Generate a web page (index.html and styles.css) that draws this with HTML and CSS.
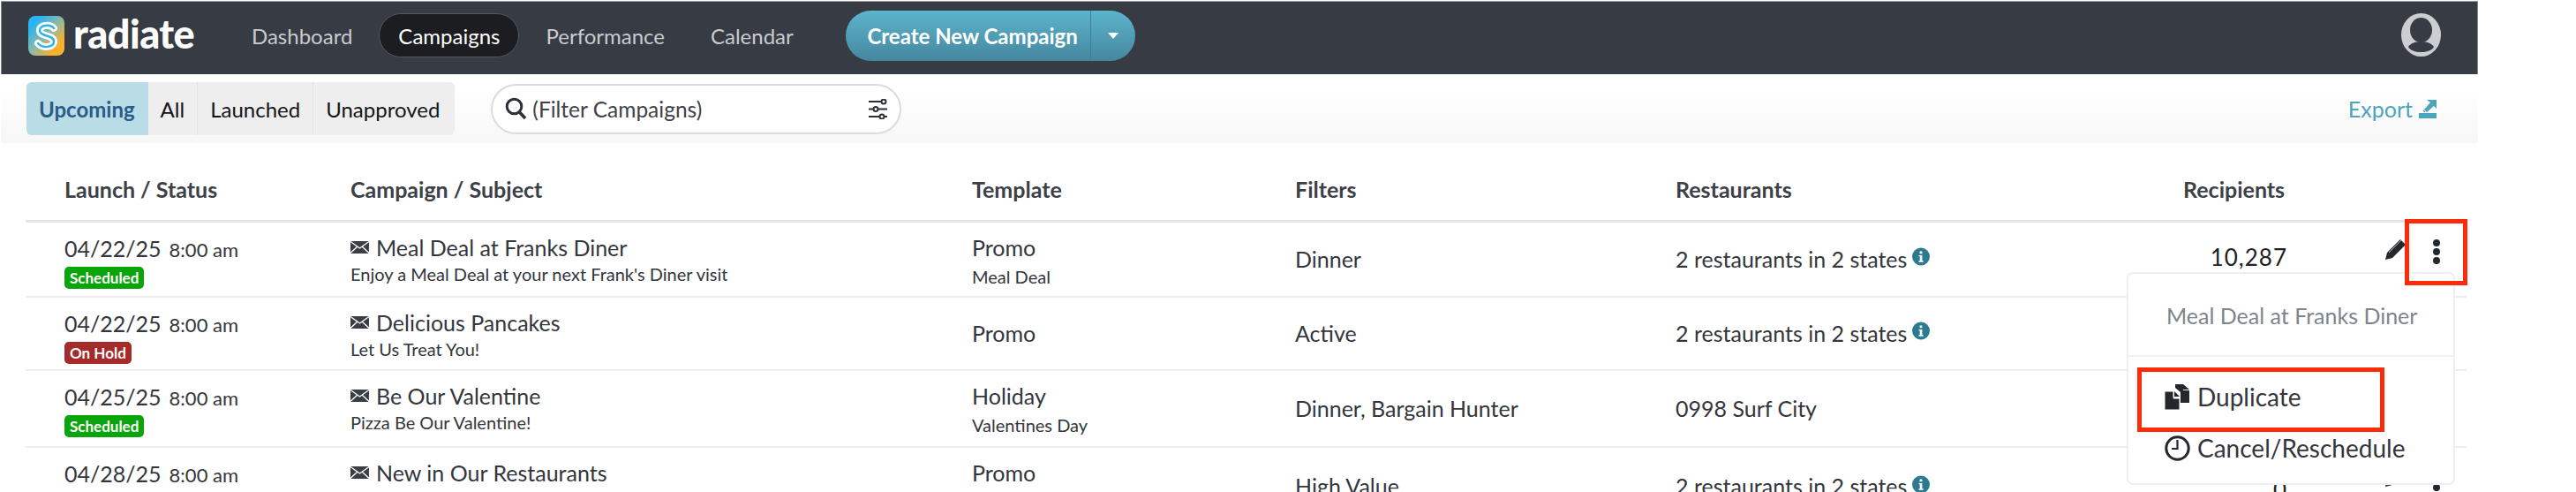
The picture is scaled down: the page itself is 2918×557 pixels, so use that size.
FILE: index.html
```html
<!DOCTYPE html>
<html lang="en">
<head>
<meta charset="utf-8">
<title>Radiate Campaigns</title>
<link rel="stylesheet" href="styles.css">
</head>
<body>
<svg class="defs" width="0" height="0" aria-hidden="true">
  <defs>
    <symbol id="env" viewBox="0 0 21 14"><rect width="21" height="14" fill="#3a3e45"/><path d="M0 .5 10.5 8 21 .5M0 13.5 8 6M21 13.5 13 6" fill="none" stroke="#fff" stroke-width="1.3"/></symbol>
    <symbol id="info" viewBox="0 0 20 20"><circle cx="10" cy="10" r="10" fill="#2c7a90"/><rect x="8.6" y="4" width="2.8" height="2.8" fill="#fff"/><path d="M7.5 8.4h3.9v6.4h1.3v1.4H7.5v-1.4h1.2V9.800H7.500z" fill="#fff"/></symbol>
    <symbol id="pencil" viewBox="0 0 24 25"><path d="M0 25 2 17 17 2 23 8 8 23z" fill="#24272c"/><path d="M4 17 19 2" stroke="#fff" stroke-width=".7"/></symbol>
  </defs>
</svg>
<div class="app">
  <header class="topbar">
    <svg class="logo" viewBox="0 0 41 45" aria-hidden="true">
      <defs><linearGradient id="lg" x1="0" y1="0" x2="1" y2="1"><stop offset=".18" stop-color="#29b4f5"/><stop offset=".5" stop-color="#8fb9a4"/><stop offset=".8" stop-color="#fbb02c"/></linearGradient></defs>
      <rect width="41" height="45" rx="8" fill="url(#lg)"/>
      <path d="M29 14C25 9 12 10 13 17C14 24 29 21 29 29C29 36 16 37 11 31" fill="none" stroke="#fff" stroke-width="8" stroke-linecap="round"/>
      <path d="M29 14C25 9 12 10 13 17C14 24 29 21 29 29C29 36 16 37 11 31" fill="none" stroke="#2fb2ee" stroke-width="2.500" stroke-linecap="round"/>
    </svg>
    <span class="brand">radiate</span>
    <nav class="nav">
      <a class="nav-link">Dashboard</a>
      <a class="nav-link is-active">Campaigns</a>
      <a class="nav-link">Performance</a>
      <a class="nav-link">Calendar</a>
    </nav>
    <div class="create">
      <span class="create-label">Create New Campaign</span>
      <span class="create-caret"></span>
    </div>
    <svg class="avatar" viewBox="0 0 45 49" aria-hidden="true">
      <ellipse cx="22.500" cy="24.500" rx="22.500" ry="24.500" fill="#ccced1"/>
      <ellipse cx="22.500" cy="19" rx="12.500" ry="14" fill="#373b44"/>
      <path d="M8 38C13 30 32 30 37 38C33 46 12 46 8 38Z" fill="#373b44"/>
    </svg>
  </header>

  <section class="toolbar">
    <div class="tabs">
      <span class="tab is-current">Upcoming</span>
      <span class="tab">All</span>
      <span class="tab">Launched</span>
      <span class="tab">Unapproved</span>
    </div>
    <div class="search">
      <svg class="search-icon" viewBox="0 0 25 26" aria-hidden="true"><circle cx="10.500" cy="10.500" r="8.300" fill="none" stroke="#2c2f35" stroke-width="3"/><path d="M16.500 17 23 24" stroke="#2c2f35" stroke-width="3.500"/></svg>
      <span class="search-text">(Filter Campaigns)</span>
      <svg class="sliders" viewBox="0 0 21 23" aria-hidden="true">
        <g fill="none" stroke="#2c2f35" stroke-width="2"><path d="M0 3h14M0 11.500h5M11 11.500h10M0 20h12M18 20h3"/><circle cx="17" cy="3" r="2.500"/><circle cx="8" cy="11.500" r="2.500"/><circle cx="15" cy="20" r="2.500"/></g>
      </svg>
    </div>
    <div class="export">
      <span>Export</span>
      <svg class="export-icon" viewBox="0 0 20 21" aria-hidden="true"><path d="M0 15h20v6H0z" fill="#4da5bc"/><path d="M9 0h11v10l-3-3-8 7-3-3 7-8z" fill="#4da5bc"/><path d="M5 12l2 2" stroke="#4da5bc" stroke-width="1.500"/></svg>
    </div>
  </section>

  <main class="board">
    <div class="row-head">
      <span>Launch / Status</span>
      <span>Campaign / Subject</span>
      <span>Template</span>
      <span>Filters</span>
      <span>Restaurants</span>
      <span>Recipients</span>
    </div>
    <div class="rows">
      <div class="row">
        <div class="cell-top">
          <div class="when"><span class="date">04/22/25</span><span class="time">8:00 am</span></div>
          <span class="badge is-ok">Scheduled</span>
        </div>
        <div class="cell-top">
          <div class="title"><svg class="env"><use href="#env"/></svg>Meal Deal at Franks Diner</div>
          <div class="sub">Enjoy a Meal Deal at your next Frank's Diner visit</div>
        </div>
        <div class="cell-top"><div class="title">Promo</div><div class="sub sub-t">Meal Deal</div></div>
        <div class="cell-mid">Dinner</div>
        <div class="cell-mid">2 restaurants in 2 states<svg class="info"><use href="#info"/></svg></div>
        <div class="count">10,287</div>
        <div class="actions"><svg class="pencil"><use href="#pencil"/></svg><span class="dots"><i></i><i></i><i></i></span></div>
      </div>
      <div class="row">
        <div class="cell-top">
          <div class="when"><span class="date">04/22/25</span><span class="time">8:00 am</span></div>
          <span class="badge is-hold">On Hold</span>
        </div>
        <div class="cell-top">
          <div class="title"><svg class="env"><use href="#env"/></svg>Delicious Pancakes</div>
          <div class="sub">Let Us Treat You!</div>
        </div>
        <div class="cell-mid">Promo</div>
        <div class="cell-mid">Active</div>
        <div class="cell-mid">2 restaurants in 2 states<svg class="info"><use href="#info"/></svg></div>
        <div class="count"></div>
        <div class="actions"></div>
      </div>
      <div class="row">
        <div class="cell-top">
          <div class="when"><span class="date">04/25/25</span><span class="time">8:00 am</span></div>
          <span class="badge is-ok">Scheduled</span>
        </div>
        <div class="cell-top">
          <div class="title"><svg class="env"><use href="#env"/></svg>Be Our Valentine</div>
          <div class="sub">Pizza Be Our Valentine!</div>
        </div>
        <div class="cell-top"><div class="title">Holiday</div><div class="sub sub-t">Valentines Day</div></div>
        <div class="cell-mid">Dinner, Bargain Hunter</div>
        <div class="cell-mid">0998 Surf City</div>
        <div class="count"></div>
        <div class="actions"></div>
      </div>
      <div class="row">
        <div class="cell-top">
          <div class="when"><span class="date">04/28/25</span><span class="time">8:00 am</span></div>
        </div>
        <div class="cell-top">
          <div class="title"><svg class="env"><use href="#env"/></svg>New in Our Restaurants</div>
        </div>
        <div class="cell-top"><div class="title">Promo</div></div>
        <div class="cell-mid">High Value</div>
        <div class="cell-mid">2 restaurants in 2 states<svg class="info"><use href="#info"/></svg></div>
        <div class="count">0</div>
        <div class="actions"><svg class="pencil"><use href="#pencil"/></svg><span class="dots"><i></i><i></i><i></i></span></div>
      </div>
    </div>

    <div class="menu">
      <div class="menu-head">Meal Deal at Franks Diner</div>
      <div class="menu-item">
        <svg class="menu-icon" viewBox="0 0 29 29" aria-hidden="true"><path d="M12 0h9v7h7v14H18V9l-6-5z" fill="#24272c"/><path d="M21 0l7 6h-7z" fill="#24272c"/><path d="M0 8h10v8h7v13H0z" fill="#24272c" stroke="#fff" stroke-width="1"/><path d="M11 8l6 6h-6z" fill="#24272c"/></svg>
        <span>Duplicate</span>
      </div>
      <div class="menu-item">
        <svg class="menu-icon" viewBox="0 0 29 29" aria-hidden="true"><circle cx="14.500" cy="14.500" r="12.700" fill="none" stroke="#24272c" stroke-width="3"/><path d="M14.500 5v10H8" fill="none" stroke="#24272c" stroke-width="2.200"/></svg>
        <span>Cancel/Reschedule</span>
      </div>
    </div>
    <div class="mark mark-dots"></div>
    <div class="mark mark-dup"></div>
  </main>
</div>
</body>
</html>
```
FILE: styles.css
```css
* { box-sizing: border-box; }
html, body { margin: 0; padding: 0; background: #fff; }
body { width: 2918px; height: 557px; overflow: hidden; font-family: Lato, "Noto Sans", sans-serif; color: #33363c; }
.defs { position: absolute; }
.app { width: 2806px; margin-left: 1px; padding-top: 1px; }

.topbar { height: 83px; display: flex; align-items: center; padding: 0 41px 0 30px; background: #373b44; border-top: 1px solid #9a9ca0; border-left: 1px solid #85878c; border-right: 1px solid #85878c; }
.logo { width: 41px; height: 45px; margin-top: -6px; flex: none; }
.brand { margin: -10px 0 0 10px; width: 180px; flex: none; font-size: 45px; line-height: 50px; font-weight: 900; color: #fff; letter-spacing: -0.5px; }
.nav { display: flex; gap: 8px; margin-top: -6px; }
.nav-link { height: 50px; padding: 0 21px; display: flex; align-items: center; border-radius: 25px; font-size: 24px; color: #c9cbce; border: 1px solid transparent; }
.nav-link.is-active { background: #1b1d21; color: #fff; border-color: #55585e; }
.create { margin: -6px 0 0 37px; width: 328px; height: 57px; display: flex; flex: none; border-radius: 29px; background: linear-gradient(#5cb5cc, #45869f); color: #fff; }
.create-label { width: 278px; display: flex; align-items: center; justify-content: flex-end; padding-right: 14px; font-size: 24px; font-weight: 700; border-right: 1px solid #3f7f96; }
.create-caret { flex: 1; display: flex; align-items: center; justify-content: center; }
.create-caret::after { content: ""; border: 6px solid transparent; border-top: 7px solid #fff; border-bottom: 0; }
.avatar { width: 45px; height: 49px; margin: -8px 0 0 auto; }

.toolbar { height: 78px; display: flex; align-items: center; padding: 0 47px 0 29px; background: linear-gradient(#fff 15%, #f7f7f8); }
.tabs { display: flex; height: 60px; border-radius: 6px; overflow: hidden; background: #eee; font-size: 24px; color: #141518; }
.tab { padding: 0 14px; display: flex; align-items: center; border-right: 1px solid #e2e2e2; }
.tab:last-child { border-right: 0; padding-right: 17px; }
.tab.is-current { padding: 0 15px 0 14px; background: #b9dce6; color: #2b5c87; font-weight: 700; border-right: 0; }
.search { margin-left: 41px; width: 465px; height: 57px; display: flex; align-items: center; padding: 0 14px; border: 2px solid #d9dce1; border-radius: 29px; background: #fff; }
.search-icon { width: 25px; height: 26px; flex: none; }
.search-text { margin-left: 6px; font-size: 24.500px; color: #3f4248; }
.sliders { width: 21px; height: 23px; margin-left: auto; flex: none; }
.export { margin-left: auto; display: flex; align-items: center; gap: 7px; font-size: 25px; color: #4da5bc; }
.export-icon { width: 20px; height: 21px; }

.board { position: relative; margin-left: 28px; width: 2765px; }
.row-head, .row { display: grid; grid-template-columns: 368px 704px 366px 431px 575px 118px 1fr; }
.row-head span:nth-child(n) { align-self: end; }
.row-head { height: 90px; padding-bottom: 20px; font-size: 25px; font-weight: 700; color: #3c4047; border-bottom: 3px solid #e2e4ea; }
.row-head span:first-child { padding-left: 44px; }
.rows { display: grid; grid-template-rows: 85px 83px 87px 90px; }
.row { border-bottom: 2px solid #eceef2; font-size: 25px; line-height: 30px; }
.row > :first-child { padding-left: 44px; }
.cell-top { padding-top: 12px; }
.cell-mid { display: flex; align-items: center; padding-bottom: 2px; }
.when { display: flex; gap: 9px; align-items: baseline; height: 36px; padding-top: 2px; }
.date { font-size: 25px; }
.time { font-size: 22px; }
.badge { display: inline-block; height: 25px; padding: 0 6px; margin-top: 2px; border-radius: 5px; color: #fff; font-size: 17px; line-height: 25px; font-weight: 700; vertical-align: top; }
.badge.is-ok { background: #0aa50a; }
.badge.is-hold { background: #a52a2a; }
.title { display: flex; align-items: center; font-size: 25px; height: 32px; }
.env { width: 21px; height: 14px; margin-right: 8px; flex: none; }
.sub { font-size: 20px; line-height: 24px; margin-top: 2px; }
.sub-t { margin-top: 5px; }
.info { width: 20px; height: 21px; margin: -4px 0 0 6px; flex: none; }
.count { padding-top: 24px; text-align: right; font-size: 26px; letter-spacing: 1px; color: #222; }
.row:last-child .count { padding-top: 32px; }
.actions { display: flex; padding: 17px 0 0 111px; gap: 0; align-items: flex-start; }
.row:last-child .actions { padding-top: 19px; }
.pencil { width: 24px; height: 25px; flex: none; }
.dots { margin-left: 30px; margin-top: 2px; display: flex; flex-direction: column; gap: 2px; }
.dots i { width: 8px; height: 8px; border-radius: 50%; background: #24272c; }

.menu { position: absolute; left: 2380px; top: 146px; width: 372px; height: 241px; background: #fff; border: 2px solid #eeeff1; border-radius: 7px; }
.menu-head { height: 94px; padding: 32px 0 0 43px; font-size: 25px; line-height: 30px; color: #7c858d; border-bottom: 2px solid #f0f1f3; margin-bottom: 16px; }
.menu-item { height: 58px; display: flex; align-items: center; gap: 8px; padding-left: 41px; font-size: 28px; color: #33363c; }
.menu-icon { width: 29px; height: 29px; flex: none; }
.mark { position: absolute; border: 5px solid #ff2a0a; }
.mark-dots { left: 2695px; top: 86px; width: 71px; height: 75px; }
.mark-dup { left: 2392px; top: 254px; width: 280px; height: 73px; }
```
